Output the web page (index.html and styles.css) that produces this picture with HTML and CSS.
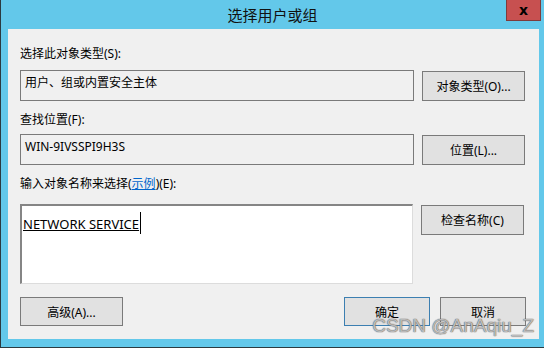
FILE: index.html
```html
<!DOCTYPE html>
<html>
    <head>
        <title>选择用户或组</title>
        <link rel="stylesheet" href="styles.css">
    </head>
    <body>
        <div class="janela">
            <div class="titulo">
                <span>选择用户或组</span>
                <button class="fechar">x</button>
            </div>
            <div class="cliente">
                <p class="rotulo">选择此对象类型(<u>S</u>):</p>
                <div class="linha">
                    <div class="campo">用户、组或内置安全主体</div>
                    <button class="botao">对象类型(<u>O</u>)...</button>
                </div>
                <p class="rotulo rotulo2">查找位置(<u>F</u>):</p>
                <div class="linha">
                    <div class="campo">WIN-9IVSSPI9H3S</div>
                    <button class="botao">位置(<u>L</u>)...</button>
                </div>
                <p class="rotulo rotulo3">输入对象名称来选择(<a href="#" class="link">示例</a>)(<u>E</u>):</p>
                <div class="linha">
                    <div class="area"><u>NETWORK SERVICE</u><span class="cursor"></span></div>
                    <button class="botao">检查名称(<u>C</u>)</button>
                </div>
                <div class="rodape">
                    <button class="botao">高级(<u>A</u>)...</button>
                    <div class="direita">
                        <button class="botao padrao">确定</button>
                        <button class="botao">取消</button>
                    </div>
                </div>
            </div>
            <div class="marca">CSDN @AnAqiu_Z</div>
        </div>
    </body>
</html>
```

FILE: styles.css
```css
body{
    margin: 0;
    background-color: #63c8ea;
    font-family: "Noto Sans", "Noto Sans CJK SC", sans-serif;
    font-size: 12px;
    color: #000;
}
u{
    text-decoration: none;
}
.janela{
    position: relative;
    width: 543px;
    height: 347px;
    border-left: 1px solid #2b3a40;
    border-bottom: 1px solid #2b3a40;
    background-color: #63c8ea;
}
.titulo{
    position: relative;
    height: 29px;
    line-height: 30px;
    text-align: center;
    font-size: 15px;
    color: #111;
}
.fechar{
    position: absolute;
    top: 0;
    right: 3px;
    width: 35px;
    height: 21px;
    padding: 0;
    border: 1px solid #7e3b3b;
    border-top: none;
    background-color: #c75050;
    font-family: "DejaVu Sans", sans-serif;
    font-weight: bold;
    font-size: 14px;
    line-height: 16px;
    color: #000;
}
.cliente{
    margin: 0 5px 0 7px;
    height: 310px;
    padding: 0 13px 0 12px;
    box-sizing: border-box;
    background-color: #f0f0f0;
    overflow: hidden;
}
.rotulo{
    margin: 17px 0 8px 0;
    line-height: 16px;
    height: 16px;
}
.rotulo2{
    margin-top: 11px;
    margin-bottom: 6px;
}
.rotulo3{
    margin-top: 11px;
    margin-bottom: 12px;
}
.link{
    color: #0066cc;
    text-decoration: underline;
}
.linha{
    display: flex;
    gap: 8px;
    align-items: flex-start;
}
.campo{
    width: 394px;
    height: 31px;
    box-sizing: border-box;
    border: 1px solid #7a7a7a;
    padding: 3px 4px;
    line-height: 18px;
}
.botao{
    width: 103px;
    height: 30px;
    margin-top: 1px;
    padding: 0;
    border: 1px solid #7a7a7a;
    background-color: #e1e1e1;
    font-family: "Noto Sans", "Noto Sans CJK SC", sans-serif;
    font-size: 12px;
    color: #000;
}
.area{
    width: 393px;
    height: 80px;
    box-sizing: border-box;
    border-top: 2px solid #858585;
    border-left: 2px solid #858585;
    border-right: 1px solid #dcdcdc;
    border-bottom: 1px solid #dcdcdc;
    background-color: #fff;
    padding: 6px 1px;
    line-height: 18px;
    font-size: 13px;
}
.area u{
    text-decoration: underline;
}
.cursor{
    display: inline-block;
    width: 1px;
    height: 22px;
    margin-left: 1px;
    vertical-align: -5px;
    background-color: #000;
}
.rodape{
    display: flex;
    justify-content: space-between;
    margin-top: 13px;
}
.rodape .botao{
    margin-top: 0;
    height: 29px;
}
.direita{
    display: flex;
    gap: 10px;
}
.direita .botao{
    width: 86px;
}
.direita .padrao{
    border-color: #3c7fb1;
}
.marca{
    position: absolute;
    right: 10px;
    bottom: 10px;
    font-family: "Liberation Sans", sans-serif;
    font-size: 19px;
    color: rgba(255,255,255,0.6);
    text-shadow: 0 0 1px #555, 0 0 1px #555;
}
```
